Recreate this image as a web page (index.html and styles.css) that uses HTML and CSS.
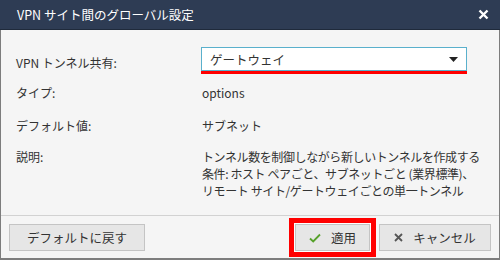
FILE: index.html
```html
<!DOCTYPE html>
<html lang="ja">
<head>
    <meta charset="UTF-8">
    <title>VPN サイト間のグローバル設定</title>
    <link rel="stylesheet" href="styles.css">
</head>
<body>
    <div class="dialog">
        <div class="titlebar">
            <span class="title">VPN サイト間のグローバル設定</span>
            <svg class="close" width="11" height="11" viewBox="0 0 11 11"><path d="M1.5 1.5 L9.5 9.5 M9.5 1.5 L1.5 9.5" stroke="#fff" stroke-width="2.4"/></svg>
        </div>

        <div class="content">
            <div class="row row-select">
                <div class="label">VPN トンネル共有:</div>
                <div class="value">
                    <div class="select">
                        <span>ゲートウェイ</span>
                        <svg width="9" height="5" viewBox="0 0 9 5"><path d="M0 0 L9 0 L4.5 5 Z" fill="#222"/></svg>
                    </div>
                    <div class="mark-line"></div>
                </div>
            </div>
            <div class="row row-type">
                <div class="label">タイプ:</div>
                <div class="value text">options</div>
            </div>
            <div class="row row-default">
                <div class="label">デフォルト値:</div>
                <div class="value text">サブネット</div>
            </div>
            <div class="row row-desc">
                <div class="label">説明:</div>
                <div class="value text desc">トンネル数を制御しながら新しいトンネルを作成する<br>条件: ホスト ペアごと、サブネットごと (業界標準)、<br>リモート サイト/ゲートウェイごとの単一トンネル</div>
            </div>
        </div>

        <div class="footer">
            <button class="btn btn-reset">デフォルトに戻す</button>
            <div class="spacer"></div>
            <button class="btn btn-apply">
                <svg width="12" height="10" viewBox="0 0 12 10"><path d="M1 5.5 L4.2 8.5 L11 1.5" stroke="#56a12a" stroke-width="1.8" fill="none"/></svg>
                適用
            </button>
            <button class="btn btn-cancel">
                <svg width="9" height="9" viewBox="0 0 9 9"><path d="M1 1 L8 8 M8 1 L1 8" stroke="#555" stroke-width="1.8"/></svg>
                キャンセル
            </button>
        </div>
    </div>
</body>
</html>
```

FILE: styles.css
```css
html, body { margin: 0; padding: 0; }
body { font-family: "Noto Sans CJK JP", "Noto Sans", sans-serif; font-size: 12px; color: #333; background: #fff; }

.dialog { width: 500px; height: 260px; box-sizing: border-box; background: #f5f5f5; border: 1px solid #7d7d7d; border-top: none; border-bottom-width: 2px; display: flex; flex-direction: column; }

.titlebar { height: 30px; box-sizing: border-box; background: #2e3c54; border-bottom: 1px solid #1f2a3b; display: flex; align-items: center; padding: 0 10px 0 17px; margin: 0 -1px; }
.title { color: #fff; font-size: 12.5px; flex: 1; }
.close { margin-right: 1px; }

.content { flex: 1; padding: 17px 0 0 15px; }
.row { display: flex; line-height: 17px; }
.label { width: 185px; flex: none; white-space: nowrap; }
.value { flex: none; }
.text { padding-left: 1px; }

.row-select .label { padding-top: 7px; }
.select { width: 266px; height: 24px; box-sizing: border-box; background: #fff; border: 1px solid #5ab0cc; display: flex; align-items: center; justify-content: space-between; padding: 0 8px 0 8px; font-size: 12.5px; color: #333; }
.mark-line { width: 266px; height: 3px; background: #ff0000; }

.row-type { margin-top: 10px; }
.row-default { margin-top: 16px; }
.row-desc { margin-top: 14px; }
.desc { white-space: nowrap; letter-spacing: -0.4px; }

.footer { height: 43px; box-sizing: border-box; border-top: 1px solid #d2d2d2; display: flex; align-items: flex-start; padding: 8px 8px 0 8px; }
.spacer { flex: 1; }
.btn { height: 27px; box-sizing: border-box; background: #e6e6e6; border: 1px solid #c4c4c4; font-family: inherit; font-size: 12.5px; color: #333; padding: 0; display: flex; align-items: center; justify-content: center; }
.btn svg { margin-right: 10px; }
.btn-reset { width: 136px; }
.btn-apply { width: 75px; box-shadow: 0 0 0 1px #fff, 0 0 0 6px #ff0000; }
.btn-cancel { width: 112px; margin-left: 9px; }
```
